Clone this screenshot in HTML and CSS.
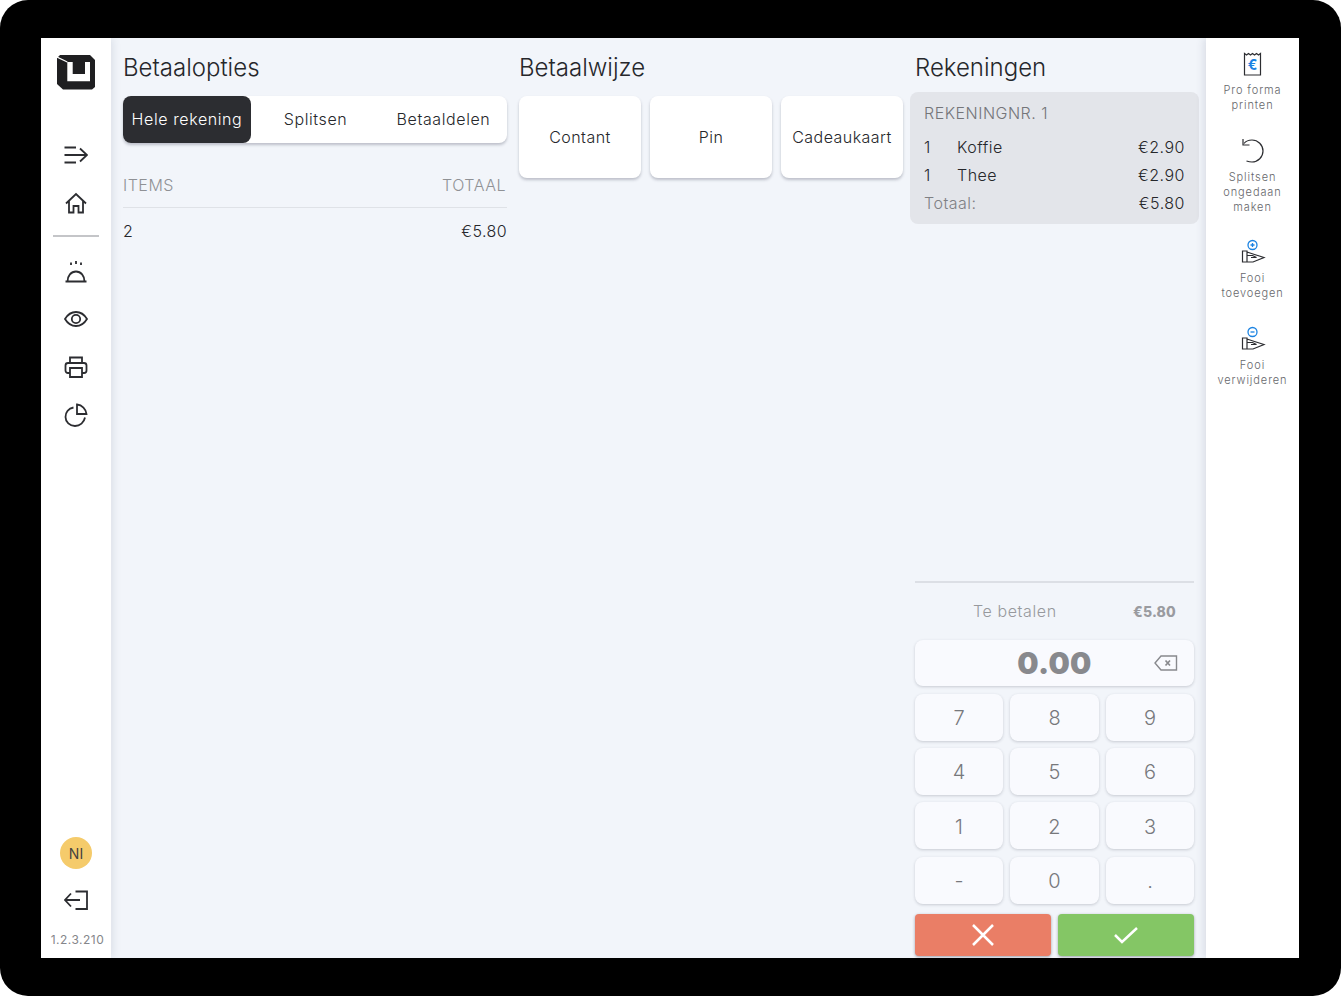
FILE: index.html
```html
<!DOCTYPE html>
<html lang="nl">
<head>
<meta charset="utf-8">
<title>Betalen</title>
<link rel="stylesheet" href="styles.css">
</head>
<body>
<div class="device">
  <div class="screen">
    <nav class="rail">
      <svg class="logo" width="38" height="36" viewBox="0 0 38 36"><path d="M0 3 3 0H33L38 5V32L35 34.500H6L0 29Z" fill="#1f1f21"/><path d="M10.300 7H15.700V19H28V7H33V26.300H10.300Z" fill="#fff"/><path d="M0 2 10.300 7" fill="none" stroke="#fff" stroke-width="1.200"/></svg>
      <div class="rail-top">
        <svg class="ico" viewBox="0 0 24 24"><path d="M0.500 4.500H12M0.500 12H23M0.500 19.500H12M16 5.500 23 12 16 18.500"/></svg>
        <svg class="ico" viewBox="0 0 24 24"><path d="M2 12.500 12 3 22 12.500M5 10V21.500H9.500V15H14.500V21.500H19V10"/></svg>
      </div>
      <div class="rail-sep"></div>
      <div class="rail-mid">
        <svg class="ico" viewBox="0 0 24 24"><path d="M1.500 22.500H22.500M3.500 22.500C3.500 17 7 12.500 12 12.500S20.500 17 20.500 22.500M7 3.500V6M12 2V5M17 3.500V6"/></svg>
        <svg class="ico" viewBox="0 0 24 24"><path d="M1 12C4 7 8 5 12 5S20 7 23 12C20 17 16 19 12 19S4 17 1 12Z"/><circle cx="12" cy="12" r="4.200"/></svg>
        <svg class="ico" viewBox="0 0 24 24"><path d="M6 8V2.500H18V8M6 18H4C2.500 18 1.500 17 1.500 15.500V10.500C1.500 9 2.500 8 4 8H20C21.500 8 22.500 9 22.500 10.500V15.500C22.500 17 21.500 18 20 18H18"/><path d="M6 13H18V22H6Z"/></svg>
        <svg class="ico" viewBox="0 0 24 24"><path d="M9.500 4.500C4.500 5.500 1.500 9.500 1.500 14C1.500 19 5.800 23 11 23C16 23 20 19.500 21 14.500"/><path d="M13 1.500C18 2 22 6 22.500 11H13Z"/></svg>
      </div>
      <div class="rail-bottom">
        <div class="avatar">NI</div>
        <svg class="ico" viewBox="0 0 24 24"><path d="M11.500 3.500H23V21H11.500M1 12H16M7 5.500 1 12 7 18.500"/></svg>
        <div class="version">1.2.3.210</div>
      </div>
    </nav>

    <main class="content">
      <section class="col">
        <h1 class="title">Betaalopties</h1>
        <div class="tabs">
          <button class="tab tab-active">Hele rekening</button>
          <button class="tab tab-split">Splitsen</button>
          <button class="tab tab-parts">Betaaldelen</button>
        </div>
        <div class="items-head"><span>ITEMS</span><span>TOTAAL</span></div>
        <div class="items-row"><span>2</span><span>€5.80</span></div>
      </section>

      <section class="col">
        <h1 class="title">Betaalwijze</h1>
        <div class="methods">
          <button class="method">Contant</button>
          <button class="method">Pin</button>
          <button class="method">Cadeaukaart</button>
        </div>
      </section>

      <section class="col col-bills">
        <h1 class="title">Rekeningen</h1>
        <div class="bill">
          <div class="bill-no">REKENINGNR. 1</div>
          <div class="bill-line"><span class="qty">1</span><span class="name">Koffie</span><span>€2.90</span></div>
          <div class="bill-line"><span class="qty">1</span><span class="name">Thee</span><span>€2.90</span></div>
          <div class="bill-line"><span class="name muted">Totaal:</span><span>€5.80</span></div>
        </div>
        <div class="pay">
          <div class="due"><span class="due-label">Te betalen</span><span class="due-value">€5.80</span></div>
          <div class="display">
            <span class="amount">0.00</span>
            <svg class="backspace" width="24" height="16" viewBox="0 0 24 16"><path d="M7 1H22.500V15H7L1 8Z"/><path d="M11.500 5.500 16 10.500M16 5.500 11.500 10.500" class="bs-x"/></svg>
          </div>
          <div class="keys">
            <button class="key">7</button><button class="key">8</button><button class="key">9</button>
            <button class="key">4</button><button class="key">5</button><button class="key">6</button>
            <button class="key">1</button><button class="key">2</button><button class="key">3</button>
            <button class="key">-</button><button class="key">0</button><button class="key">.</button>
          </div>
          <div class="actions">
            <button class="act act-no"><svg width="24" height="24" viewBox="0 0 24 24"><path d="M2 2 22 22M22 2 2 22"/></svg></button>
            <button class="act act-ok"><svg width="26" height="20" viewBox="0 0 26 20"><path d="M2 10 9 17 24 3"/></svg></button>
          </div>
        </div>
      </section>
    </main>

    <aside class="tools">
      <div class="tool">
        <svg class="tool-ico" width="24" height="26" viewBox="0 0 24 26"><path class="s" d="M3.500 2.500 5.500 4 7.500 2.500 9.500 4 11.500 2.500 13.500 4 15.500 2.500 17.500 4 19.500 2.500V24H3.500Z"/><text x="11.500" y="18.500" class="euro">€</text></svg>
        <div class="tool-label">Pro forma<br>printen</div>
      </div>
      <div class="tool">
        <svg class="tool-ico" width="26" height="26" viewBox="0 0 26 26"><path class="s" d="M4 5.500C6 3 9 2 12 2C18 2 23 7 23 13S18 24 12 24C10 24 8 23.500 6.500 23"/><path class="s" d="M3 1V7H9.500"/></svg>
        <div class="tool-label">Splitsen<br>ongedaan<br>maken</div>
      </div>
      <div class="tool">
        <svg class="tool-ico" width="26" height="26" viewBox="0 0 26 26"><circle class="b" cx="12.500" cy="6" r="4.500"/><path class="b" d="M10.500 6H14.500M12.500 4V8"/><path class="s" d="M2.500 12H7V23H2.500ZM7 13 14.500 15.500 24 18.500 13 23H7M7 16.500H12.500L16.500 18.500H11"/></svg>
        <div class="tool-label">Fooi<br>toevoegen</div>
      </div>
      <div class="tool">
        <svg class="tool-ico" width="26" height="26" viewBox="0 0 26 26"><circle class="b" cx="12.500" cy="6" r="4.500"/><path class="b" d="M10.500 6H14.500"/><path class="s" d="M2.500 12H7V23H2.500ZM7 13 14.500 15.500 24 18.500 13 23H7M7 16.500H12.500L16.500 18.500H11"/></svg>
        <div class="tool-label">Fooi<br>verwijderen</div>
      </div>
    </aside>
  </div>
</div>
</body>
</html>
```
FILE: styles.css
```css
* { box-sizing: border-box; }
html, body { margin: 0; padding: 0; background: #fff; }
body { font-family: Inter, "Liberation Sans", sans-serif; font-weight: 300; color: #26272b; }
button { font: inherit; border: 0; cursor: pointer; }

.device {
  width: 1341px; height: 996px; background: #000; border-radius: 28px;
  padding: 38px 42px 38px 41px;
}
.screen { display: flex; height: 920px; background: #f2f5fa; overflow: hidden; }

.rail {
  width: 70px; flex: none; background: #fff; display: flex; flex-direction: column;
  align-items: center; padding-top: 17px; position: relative; z-index: 2;
  box-shadow: 2px 0 8px rgba(60, 70, 100, .12);
}
.logo { display: block; }
.ico { width: 24px; height: 24px; fill: none; stroke: #2c2d31; stroke-width: 1.800; display: block; }
.rail-top { display: flex; flex-direction: column; gap: 24px; margin-top: 52px; }
.rail-sep { width: 46px; height: 2px; background: #c4c5c8; margin-top: 20px; }
.rail-mid { display: flex; flex-direction: column; gap: 24px; margin-top: 21.500px; }
.rail-bottom { margin-top: auto; display: flex; flex-direction: column; align-items: center; padding-bottom: 11px; }
.avatar {
  width: 32px; height: 32px; border-radius: 50%; background: #f5cb6b; color: #44433f;
  font-size: 14px; font-weight: 400; display: flex; align-items: center; justify-content: center;
}
.rail-bottom .ico { margin-top: 19px; }
.version { font-size: 12px; font-weight: 400; color: #85868a; margin: 20px 0 0 3px; letter-spacing: .5px; line-height: 15px; }

.content {
  flex: 1; display: grid; grid-template-columns: 384px 384px 291px; column-gap: 12px;
  padding: 0 0 0 12px; min-width: 0;
}
.col { display: flex; flex-direction: column; min-width: 0; }
.col-bills { padding: 0 12px 2.500px 0; }
.title { margin: 14px 0 0; font-size: 24px; font-weight: 300; line-height: 32px; color: #26272b; }

.tabs {
  display: flex; height: 47px; margin-top: 12px; background: #fff; border-radius: 8px;
  box-shadow: 0 2px 3px rgba(50, 55, 75, .28);
}
.tab { background: none; font-size: 16px; letter-spacing: .6px; color: #26272b; padding: 0 0 1px; border-radius: 8px; }
.tab-active { width: 128px; background: #2c2d31; color: #fff; }
.tab-split { width: 129px; }
.tab-parts { width: 127px; }

.items-head {
  display: flex; justify-content: space-between; margin-top: 24px; height: 41px;
  padding: 8px 1px 0 0; border-bottom: 1px solid #dfe2e7; font-size: 16px; line-height: 20px; color: #8f9195; letter-spacing: .5px;
}
.items-row { display: flex; justify-content: space-between; margin-top: 13px; font-size: 16px; line-height: 20px; letter-spacing: .4px; }

.methods { display: flex; gap: 9px; margin-top: 12px; }
.method {
  width: 122px; height: 82px; background: #fff; border-radius: 8px; font-size: 16px; letter-spacing: .45px;
  color: #26272b; padding: 0; box-shadow: 0 2px 3px rgba(50, 55, 75, .28);
}

.bill { margin: 8px -5px 0; padding: 11px 14px 0; height: 132px; background: #e3e5ea; border-radius: 8px; font-size: 16px; letter-spacing: .5px; }
.bill-no { line-height: 20px; color: #747579; margin-bottom: 10px; }
.bill-line { display: flex; height: 28px; line-height: 28px; }
.qty { width: 33px; }
.name { flex: 1; }
.muted { color: #7f8084; }

.pay { margin-top: auto; }
.due {
  display: flex; height: 59px; align-items: center; border-top: 2px solid #dcdfe5; justify-content: space-between;
  padding: 0 18px 0 58px;
}
.due-label { font-size: 16px; color: #97999d; letter-spacing: .6px; margin-bottom: 2px; }
.due-value { font-size: 14px; font-weight: 800; color: #9a9ba0; letter-spacing: .2px; }

.display {
  position: relative; height: 46px; background: #f9fafe; border-radius: 8px; display: flex; align-items: center; justify-content: center;
  box-shadow: 0 1px 3px rgba(50, 55, 75, .22);
}
.amount { font-size: 30px; font-weight: 900; color: #88898d; letter-spacing: .3px; }
.backspace { position: absolute; right: 16px; top: 15px; fill: none; stroke: #88898d; stroke-width: 1.400; }
.bs-x { stroke-width: 1.700; }

.keys { display: grid; grid-template-columns: 88px 89px 88px; gap: 7.330px 7px; margin-top: 7.500px; }
.key {
  height: 47px; background: #f9fafe; border-radius: 8px; font-size: 20px; font-weight: 300; color: #77787c; padding: 2px 0 0;
  box-shadow: 0 1px 3px rgba(50, 55, 75, .22);
}
.actions { display: grid; grid-template-columns: 136px 136px; gap: 7px; margin-top: 10px; }
.act { height: 42px; border-radius: 4px; display: flex; align-items: center; justify-content: center; padding: 0; box-shadow: 0 1px 3px rgba(50, 55, 75, .45); }
.act svg { fill: none; stroke: #fff; stroke-width: 2.500; }
.act-no { background: #ea7e66; }
.act-ok { background: #84c665; }

.tools {
  width: 93px; flex: none; background: #fff; display: flex; flex-direction: column; align-items: center;
  padding-top: 13px; gap: 24.500px; box-shadow: -2px 0 8px rgba(60, 70, 100, .14); position: relative; z-index: 2;
}
.tool { display: flex; flex-direction: column; align-items: center; width: 100%; }
.tool-ico { display: block; }
.tool-ico .s { fill: none; stroke: #2c2d31; stroke-width: 1.200; }
.tool-ico .b { fill: none; stroke: #1b83e2; stroke-width: 1.300; }
.euro { font-family: Inter, sans-serif; font-size: 14px; font-weight: 700; fill: #1b83e2; text-anchor: middle; }
.tool-label { margin-top: 6px; font-size: 11px; font-weight: 300; line-height: 15px; letter-spacing: .9px; color: #66676b; text-align: center; }
```
